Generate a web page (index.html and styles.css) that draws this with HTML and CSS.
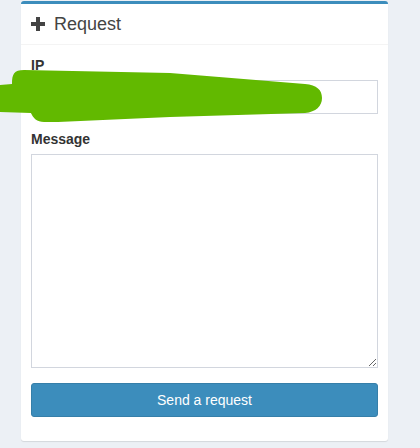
FILE: index.html
```html
<!DOCTYPE html>
<html>
<head>
<meta charset="utf-8">
<link rel="stylesheet" href="styles.css">
</head>
<body>
<div class="box">
  <div class="box-header">
    <h3 class="box-title"><span class="plus" aria-hidden="true"></span>Request</h3>
  </div>
  <form class="box-body">
    <div class="form-group">
      <label class="label">IP</label>
      <input class="control" type="text">
    </div>
    <div class="form-group">
      <label class="label">Message</label>
      <textarea class="control area"></textarea>
    </div>
    <button class="btn" type="button">Send a request</button>
  </form>
</div>
<svg class="scribble" width="330" height="130" viewBox="0 0 330 130">
  <path d="M0,85 L12,84 C12,74 14,70 24,70 L170,73 L305,84 C317,85 322,90 322,98 C322,106 316,112 305,113 L170,117 L58,122 L44,122 C37,122 33,118 31,113 L0,112 Z" fill="#62b900"/>
</svg>
</body>
</html>
```
FILE: styles.css
```css
html, body {
  margin: 0;
  padding: 0;
  background: #ecf0f5;
  font-family: "Liberation Sans", Arial, sans-serif;
  font-size: 14px;
  color: #333;
}
body {
  position: relative;
  height: 448px;
  overflow: hidden;
}
.box {
  margin: 1px 0 0 21px;
  width: 367px;
  background: #fff;
  border-top: 3px solid #3c8dbc;
  border-radius: 3px;
  box-shadow: 0 1px 1px rgba(0,0,0,0.1);
}
.box-header {
  padding: 10px;
  border-bottom: 1px solid #f4f4f4;
}
.box-title {
  margin: 0;
  font-size: 18px;
  line-height: 20px;
  font-weight: normal;
  color: #444;
  display: flex;
  align-items: center;
}
.plus {
  position: relative;
  width: 14px;
  height: 14px;
  margin-right: 9px;
  margin-left: 0;
}
.plus::before, .plus::after {
  content: "";
  position: absolute;
  background: #444;
}
.plus::before {
  left: 0; right: 0;
  top: 5px; height: 4px;
}
.plus::after {
  top: 0; bottom: 0;
  left: 5px; width: 4px;
}
.box-body {
  padding: 10px 10px 24px;
  display: block;
  margin: 0;
}
.form-group {
  margin-bottom: 15px;
}
.label {
  display: block;
  font-weight: bold;
  line-height: 20px;
  margin-bottom: 5px;
  color: #333;
}
.control {
  display: block;
  box-sizing: border-box;
  width: 100%;
  height: 34px;
  border: 1px solid #d2d6de;
  border-radius: 0;
  padding: 6px 12px;
  font-family: inherit;
  font-size: 14px;
  background: #fff;
  margin: 0;
  outline: none;
}
.area {
  height: 214px;
  resize: vertical;
}
.btn {
  display: block;
  width: 100%;
  height: 34px;
  box-sizing: border-box;
  background: #3c8dbc;
  border: 1px solid #367fa9;
  border-radius: 3px;
  color: #fff;
  font-family: inherit;
  font-size: 14px;
  padding: 6px 12px;
  margin: 0;
}
.scribble {
  position: absolute;
  left: 0;
  top: 0;
}
```
